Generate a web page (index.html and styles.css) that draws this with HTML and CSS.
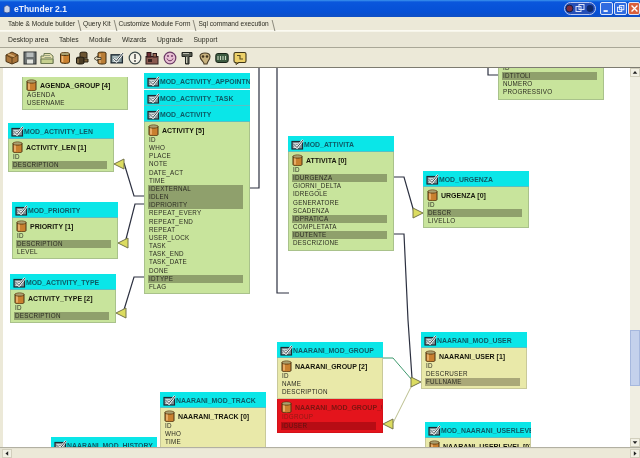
FILE: index.html
```html
<!DOCTYPE html>
<html lang="en">
<head>
<meta charset="utf-8">
<title>eThunder 2.1</title>
<link rel="stylesheet" href="styles.css">
</head>
<body>
<svg class="defs" width="0" height="0" aria-hidden="true">
  <symbol id="cyl" viewBox="0 0 11 13">
    <path d="M1 2.5C1 .6 10 .6 10 2.5V10.5C10 12.4 1 12.4 1 10.5Z" fill="#c9802f" stroke="#4a3312" stroke-width="1"/>
    <path d="M3 3.8V10.6" stroke="#efb877" stroke-width="1.6"/>
    <path d="M1 2.6C1 4.5 10 4.5 10 2.6" fill="none" stroke="#4a3312" stroke-width="1"/>
    <ellipse cx="5.5" cy="2.4" rx="4" ry="1.2" fill="#a8a070"/>
  </symbol>
  <symbol id="chk" viewBox="0 0 13 11">
    <rect x="1" y="2.5" width="10.5" height="7.5" fill="#7f9498" stroke="#1e2a32" stroke-width="1.2"/>
    <path d="M2.5 4.5H7M2.5 6.5H6M2.5 8.5H8" stroke="#dfe6e6" stroke-width=".8"/>
    <path d="M3.5 6L6 8.500L12 1" fill="none" stroke="#fff" stroke-width="2.200"/>
    <path d="M3.5 6L6 8.500L12 1" fill="none" stroke="#1c2a30" stroke-width=".9"/>
  </symbol>
</svg>
<div class="app">
  <header class="titlebar">
    <svg class="app-icon" viewBox="0 0 8 10"><path d="M4 1L7 3V8L4 9L1 8V3Z" fill="#c9d4ea" stroke="#31509a" stroke-width=".8"/></svg>
    <span class="app-name">eThunder 2.1</span>
    <div class="win-controls">
      <svg class="win-cluster" viewBox="0 0 32 13">
        <rect x=".5" y=".5" width="31" height="12" rx="6" fill="#254fb8" stroke="#b9c8ee"/>
        <circle cx="5.5" cy="6.5" r="3.4" fill="#7d2a3a" stroke="#10204a"/>
        <rect x="12" y="4.5" width="5" height="5" fill="none" stroke="#dbe4fa"/>
        <rect x="15" y="2.5" width="5" height="5" fill="none" stroke="#dbe4fa"/>
        <circle cx="26" cy="6.5" r="3.4" fill="#102a6b"/>
      </svg>
      <span class="win-btn"><svg viewBox="0 0 13 13"><rect x="3" y="8.5" width="5" height="2" fill="#fff"/></svg></span>
      <span class="win-btn"><svg viewBox="0 0 13 13"><rect x="3" y="5" width="5" height="5" fill="none" stroke="#fff"/><rect x="5.5" y="3" width="5" height="5" fill="none" stroke="#fff"/></svg></span>
      <span class="win-btn win-close"><svg viewBox="0 0 13 13"><path d="M3 3L10 10M10 3L3 10" stroke="#fff" stroke-width="1.6"/></svg></span>
    </div>
  </header>

  <nav class="tabs">
    <span class="tab">Table &amp; Module builder</span>
    <span class="tab">Query Kit</span>
    <span class="tab">Customize Module Form</span>
    <span class="tab">Sql command execution</span>
  </nav>

  <nav class="menu">
    <span>Desktop area</span><span>Tables</span><span>Module</span><span>Wizards</span><span>Upgrade</span><span>Support</span>
  </nav>

  <div class="toolbar">
    <svg viewBox="0 0 14 14"><path d="M7 1L13 4V10.5L7 13L1 10.5V4Z" fill="#a9743a" stroke="#4d3415"/><path d="M1 4L7 7L13 4M7 7V13" fill="none" stroke="#5d3f18"/><path d="M3 2.8L9.5 5.7" stroke="#d8ae72" stroke-width="1.3"/></svg>
    <svg viewBox="0 0 14 14"><rect x="1" y="1" width="12" height="12" fill="#6d7272" stroke="#2c3030"/><rect x="3.5" y="1.5" width="7" height="4.5" fill="#b7bcbc"/><rect x="4" y="8.5" width="6" height="4" fill="#e3e5e0"/></svg>
    <svg viewBox="0 0 14 14"><path d="M1 5H4V2.5H10L13 5V12.5H1Z" fill="#e5dfae" stroke="#6d7a52"/><path d="M4.5 4.5H10M4.5 6.5H11" stroke="#9aa582"/><path d="M1 8H13V12.5H1Z" fill="#c6d08f" stroke="#6d7a52"/></svg>
    <svg viewBox="0 0 14 14"><use href="#cyl" x="1.5" y="0" width="11" height="14"/></svg>
    <svg viewBox="0 0 14 14"><path d="M5 2C5 .8 12 .8 12 2V7H5Z" fill="#6c5532" stroke="#2a2213"/><path d="M1.5 7C1.5 5.8 9 5.8 9 7V12C9 13.4 1.5 13.4 1.5 12Z" fill="#4b3d25" stroke="#1e1a10"/><path d="M3 8V12" stroke="#a58a5c"/><path d="M9 8H13V11H9Z" fill="#7a6038" stroke="#2a2213"/></svg>
    <svg viewBox="0 0 14 14"><path d="M5 2C5 .8 13 .8 13 2V12C13 13.4 5 13.4 5 12Z" fill="#b97d35" stroke="#3f2c10"/><path d="M7 3V12" stroke="#e8bb80" stroke-width="1.2"/><path d="M1 7.5L4.5 5V6.5H8V8.5H4.5V10Z" fill="#d9d3b8" stroke="#3a3325" stroke-width=".8"/></svg>
    <svg viewBox="0 0 14 14"><use href="#chk" x="0" y="1" width="14" height="12"/></svg>
    <svg viewBox="0 0 14 14"><circle cx="7" cy="7" r="5.8" fill="#f4f2e8" stroke="#3d4a4a" stroke-width="1.2"/><path d="M7 3V8" stroke="#3d3d3d" stroke-width="1.4"/><circle cx="7" cy="10" r=".9" fill="#3d3d3d"/></svg>
    <svg viewBox="0 0 14 14"><rect x="1" y="5.5" width="12" height="7.5" fill="#8a5a50" stroke="#33201e"/><rect x="2" y="1.5" width="4" height="4.5" fill="#6f2e33" stroke="#2a1517"/><rect x="8" y="2.5" width="3.5" height="3.5" fill="#9c6b55" stroke="#2a1517"/><path d="M3 8H7V11H3Z" fill="#3a2422"/></svg>
    <svg viewBox="0 0 14 14"><circle cx="7" cy="7" r="5.8" fill="#e7bfd3" stroke="#6b3a66" stroke-width="1.2"/><path d="M4 7.5C5 10.5 9 10.5 10 7.5" fill="none" stroke="#6b2f5f"/><circle cx="5" cy="5" r=".9" fill="#6b2f5f"/><circle cx="9" cy="5" r=".9" fill="#6b2f5f"/></svg>
    <svg viewBox="0 0 14 14"><path d="M2 1.5H12V5.5H9V13H5.5V5.5H2Z" fill="#565a50" stroke="#20231e"/><path d="M3 2.5H9" stroke="#bcbcae"/><path d="M6.7 6V12" stroke="#e4e2d0"/></svg>
    <svg viewBox="0 0 14 14"><path d="M2 5C2 1 12 1 12 5.5C12 9 9.5 10 9 13H6C6 10.500 2 9.500 2 5Z" fill="#c8b27e" stroke="#4a3d25" stroke-width="1.1"/><circle cx="5" cy="5.500" r="1.300" fill="#43351e"/><circle cx="9" cy="5.500" r="1.300" fill="#43351e"/></svg>
    <svg viewBox="0 0 14 14"><rect x=".8" y="2.500" width="12.400" height="9" rx="2" fill="#3c5a40" stroke="#182418"/><path d="M3 5V9M5.500 5V9M8 5V9M10.500 5V9" stroke="#c7d5bd" stroke-width="1.100"/></svg>
    <svg viewBox="0 0 14 14"><rect x="1" y="1.500" width="12" height="10" rx="1.500" fill="#edd16a" stroke="#3e3518" stroke-width="1.100"/><path d="M3 11.500V13.500L6 11.500" fill="#edd16a" stroke="#3e3518"/><path d="M4 4.500H7V8H10" fill="none" stroke="#5c4d1d" stroke-width="1.100"/></svg>
  </div>

  <div class="workspace">
    <main class="canvas">
      <svg class="links" width="627" height="379" viewBox="3 68 627 379">
        <g class="link">
          <path d="M249 188H259V68"/>
          <path d="M277 68V293H289"/>
          <path d="M488 68V75H498"/>
          <path d="M124 163L134 196H144"/>
          <path d="M125 243L135 204H144"/>
          <path d="M123 313L134 277H144"/>
          <path d="M394 177H404L414 212"/>
          <path d="M394 234H404L408 320L412 378"/>
        </g>
        <path class="link-teal" d="M382 358H393L412 380"/>
        <path class="link-thin" d="M393 423L412 385"/>
        <g class="arrow">
          <path d="M114 164L124 159V169Z"/>
          <path d="M118 243L128 238V248Z"/>
          <path d="M116 313L126 308V318Z"/>
          <path d="M423 213L413 208V218Z"/>
          <path d="M421 382L411 377V387Z"/>
          <path d="M383 424L393 419V429Z"/>
        </g>
      </svg>

      <section class="node n-agenda">
        <div class="body">
          <div class="title"><svg><use href="#cyl"/></svg>AGENDA_GROUP [4]</div>
          <div class="row">AGENDA</div>
          <div class="row">USERNAME</div>
        </div>
      </section>

      <section class="node n-appoint">
        <div class="head"><svg><use href="#chk"/></svg>MOD_ACTIVITY_APPOINTN</div>
      </section>
      <section class="node n-task">
        <div class="head"><svg><use href="#chk"/></svg>MOD_ACTIVITY_TASK</div>
      </section>
      <section class="node n-activity">
        <div class="head"><svg><use href="#chk"/></svg>MOD_ACTIVITY</div>
        <div class="body">
          <div class="title"><svg><use href="#cyl"/></svg>ACTIVITY [5]</div>
          <div class="row">ID</div>
          <div class="row">WHO</div>
          <div class="row">PLACE</div>
          <div class="row">NOTE</div>
          <div class="row">DATE_ACT</div>
          <div class="row">TIME</div>
          <div class="row key">IDEXTERNAL</div>
          <div class="row key">IDLEN</div>
          <div class="row key">IDPRIORITY</div>
          <div class="row">REPEAT_EVERY</div>
          <div class="row">REPEAT_END</div>
          <div class="row">REPEAT</div>
          <div class="row">USER_LOCK</div>
          <div class="row">TASK</div>
          <div class="row">TASK_END</div>
          <div class="row">TASK_DATE</div>
          <div class="row">DONE</div>
          <div class="row key">IDTYPE</div>
          <div class="row">FLAG</div>
        </div>
      </section>

      <section class="node n-len">
        <div class="head"><svg><use href="#chk"/></svg>MOD_ACTIVITY_LEN</div>
        <div class="body">
          <div class="title"><svg><use href="#cyl"/></svg>ACTIVITY_LEN [1]</div>
          <div class="row">ID</div>
          <div class="row key">DESCRIPTION</div>
        </div>
      </section>

      <section class="node n-priority">
        <div class="head"><svg><use href="#chk"/></svg>MOD_PRIORITY</div>
        <div class="body">
          <div class="title"><svg><use href="#cyl"/></svg>PRIORITY [1]</div>
          <div class="row">ID</div>
          <div class="row key">DESCRIPTION</div>
          <div class="row">LEVEL</div>
        </div>
      </section>

      <section class="node n-type">
        <div class="head"><svg><use href="#chk"/></svg>MOD_ACTIVITY_TYPE</div>
        <div class="body">
          <div class="title"><svg><use href="#cyl"/></svg>ACTIVITY_TYPE [2]</div>
          <div class="row">ID</div>
          <div class="row key">DESCRIPTION</div>
        </div>
      </section>

      <section class="node n-attivita">
        <div class="head"><svg><use href="#chk"/></svg>MOD_ATTIVITA</div>
        <div class="body">
          <div class="title"><svg><use href="#cyl"/></svg>ATTIVITA [0]</div>
          <div class="row">ID</div>
          <div class="row key">IDURGENZA</div>
          <div class="row">GIORNI_DELTA</div>
          <div class="row">IDREGOLE</div>
          <div class="row">GENERATORE</div>
          <div class="row">SCADENZA</div>
          <div class="row key">IDPRATICA</div>
          <div class="row">COMPLETATA</div>
          <div class="row key">IDUTENTE</div>
          <div class="row">DESCRIZIONE</div>
        </div>
      </section>

      <section class="node n-urgenza">
        <div class="head"><svg><use href="#chk"/></svg>MOD_URGENZA</div>
        <div class="body">
          <div class="title"><svg><use href="#cyl"/></svg>URGENZA [0]</div>
          <div class="row">ID</div>
          <div class="row key">DESCR</div>
          <div class="row">LIVELLO</div>
        </div>
      </section>

      <section class="node n-titoli">
        <div class="body">
          <div class="row">ID</div>
          <div class="row key">IDTITOLI</div>
          <div class="row">NUMERO</div>
          <div class="row">PROGRESSIVO</div>
        </div>
      </section>

      <section class="node n-user">
        <div class="head"><svg><use href="#chk"/></svg>NAARANI_MOD_USER</div>
        <div class="body yellow">
          <div class="title"><svg><use href="#cyl"/></svg>NAARANI_USER [1]</div>
          <div class="row">ID</div>
          <div class="row">DESCRUSER</div>
          <div class="row key">FULLNAME</div>
        </div>
      </section>

      <section class="node n-group">
        <div class="head"><svg><use href="#chk"/></svg>NAARANI_MOD_GROUP</div>
        <div class="body yellow">
          <div class="title"><svg><use href="#cyl"/></svg>NAARANI_GROUP [2]</div>
          <div class="row">ID</div>
          <div class="row">NAME</div>
          <div class="row">DESCRIPTION</div>
        </div>
        <div class="body red">
          <div class="title"><svg><use href="#cyl"/></svg>NAARANI_MOD_GROUP_USE</div>
          <div class="row">IDGROUP</div>
          <div class="row key">IDUSER</div>
        </div>
      </section>

      <section class="node n-track">
        <div class="head"><svg><use href="#chk"/></svg>NAARANI_MOD_TRACK</div>
        <div class="body yellow">
          <div class="title"><svg><use href="#cyl"/></svg>NAARANI_TRACK [0]</div>
          <div class="row">ID</div>
          <div class="row">WHO</div>
          <div class="row">TIME</div>
        </div>
      </section>

      <section class="node n-history">
        <div class="head"><svg><use href="#chk"/></svg>NAARANI_MOD_HISTORY</div>
      </section>

      <section class="node n-level">
        <div class="head"><svg><use href="#chk"/></svg>MOD_NAARANI_USERLEVEL</div>
        <div class="body yellow">
          <div class="title"><svg><use href="#cyl"/></svg>NAARANI_USERLEVEL [0]</div>
        </div>
      </section>
    </main>

    <aside class="vscroll">
      <span class="sbtn"><svg viewBox="0 0 9 9"><path d="M1.500 6L4.500 2.500L7.500 6Z" fill="#222"/></svg></span>
      <div class="vtrack"><span class="vthumb"></span></div>
      <span class="sbtn"><svg viewBox="0 0 9 9"><path d="M1.500 3L4.500 6.500L7.500 3Z" fill="#222"/></svg></span>
    </aside>
  </div>

  <footer class="hscroll">
    <span class="sbtn"><svg viewBox="0 0 9 9"><path d="M6 1.500L2.500 4.500L6 7.500Z" fill="#222"/></svg></span>
    <div class="htrack"></div>
    <span class="sbtn"><svg viewBox="0 0 9 9"><path d="M3 1.500L6.500 4.500L3 7.500Z" fill="#222"/></svg></span>
  </footer>
</div>
</body>
</html>
```

FILE: styles.css
```css
* { box-sizing: border-box; }
html, body { margin: 0; height: 100%; overflow: hidden; background: #ece9d8; }
.defs { position: absolute; }
.app {
  width: 640px; height: 458px; display: flex; flex-direction: column;
  font-family: "Liberation Sans", Arial, sans-serif; color: #2c2c22;
  filter: blur(0.35px);
}

.titlebar {
  height: 17px; flex: none; display: flex; align-items: center; padding-left: 3px;
  background: linear-gradient(#3d95ee 0, #0a56dc 2px, #0650d6 12px, #0f4fc4 17px);
}
.app-icon { width: 8px; height: 10px; margin-right: 3px; }
.app-name { color: #e8eefc; font-size: 8.500px; font-weight: bold; letter-spacing: 0; }
.win-controls { margin-left: auto; display: flex; align-items: center; gap: 1px; }
.win-cluster { width: 32px; height: 13px; margin-right: 3px; }
.win-btn {
  width: 13px; height: 13px; border: 1px solid #dce6fa; border-radius: 2px;
  background: #2f6be0; display: block;
}
.win-btn svg { display: block; width: 11px; height: 11px; }
.win-close { background: #d9603c; width: 12px; }

.tabs {
  height: 14px; flex: none; display: flex; padding-left: 4px; align-items: center;
  font-size: 6.600px; background: #ece9d8; border-bottom: 1px solid #fbfaf2;
}
.tab { position: relative; padding: 0 4px; white-space: nowrap; }
.tab::after {
  content: ""; position: absolute; right: -1px; top: 0; width: 1px; height: 11px;
  background: #8c8a7c; transform: skewX(14deg);
}

.menu {
  height: 17px; flex: none; display: flex; align-items: center; gap: 10.500px; padding-left: 8px;
  font-size: 6.800px; background: #e9e6d6; border-top: 1px solid #f6f5ea; border-bottom: 1px solid #a9a797;
}

.toolbar {
  height: 20px; flex: none; display: flex; align-items: center; gap: 3.500px; padding-left: 5px;
  background: #ece9d8; border-bottom: 1px solid #7d7b70;
}
.toolbar svg { width: 14px; height: 14px; flex: none; }

.workspace { flex: 1; min-height: 0; display: flex; }
.canvas {
  flex: 1; position: relative; overflow: hidden; background: #fff;
  margin-left: 3px; border-left: 0;
}
.links { position: absolute; left: 0; top: 0; }
.link path { fill: none; stroke: #2c3040; stroke-width: 1.200; }
.link-teal { fill: none; stroke: #3f9a6e; stroke-width: 1; }
.link-thin { fill: none; stroke: #a8ad70; stroke-width: .8; }
.arrow path { fill: #dcdc60; stroke: #74744a; stroke-width: 1; }

.node { position: absolute; width: 106px; font-size: 6.300px; letter-spacing: .25px; }
.head {
  height: 16px; display: flex; align-items: center; white-space: nowrap; overflow: hidden;
  background: #0ae6e8; color: #0d5a66; font-weight: bold; font-size: 6.900px; letter-spacing: 0;
  padding-left: 3px; box-shadow: inset 0 -1px 0 #58c0c4;
}
.head svg { width: 13px; height: 11px; flex: none; }
.body { background: #c8e49c; border: 1px solid #a9c28b; border-top: 0; padding: 2px 0 2px 3px; }
.body.yellow { background: #e9e9a9; border-color: #c9c99a; }
.body.red { background: #e4141c; border-color: #d41018; color: #8f1a14; padding-top: 2px; }
.title {
  height: 12px; display: flex; align-items: center; white-space: nowrap; overflow: hidden;
  font-weight: bold; font-size: 7px; letter-spacing: 0; color: #17170c;
}
.title svg { width: 11px; height: 13px; margin-right: 3px; flex: none; }
.row { height: 8.170px; line-height: 8.170px; padding-left: 1px; margin-right: 6px; white-space: nowrap; }
.key { background: #8fa06c; }
.yellow .key { background: #aaa878; }
.red .key { background: #b70c14; color: #5e1210; }
.red .title { color: #7d1410; }

.n-agenda   { left: 19px;  top: 9px; }
.n-appoint  { left: 141px; top: 5px; }
.n-task     { left: 141px; top: 22px; }
.n-activity { left: 141px; top: 38px; }
.n-len      { left: 5px;   top: 55px; }
.n-priority { left: 9px;   top: 134px; }
.n-type     { left: 7px;   top: 206px; }
.n-attivita { left: 285px; top: 68px; }
.n-urgenza  { left: 420px; top: 103px; }
.n-titoli   { left: 495px; top: -6px; }
.n-user     { left: 418px; top: 264px; }
.n-group    { left: 274px; top: 274px; }
.n-track    { left: 157px; top: 324px; }
.n-history  { left: 48px;  top: 369px; }
.n-level    { left: 422px; top: 354px; }

.vscroll { width: 10px; flex: none; display: flex; flex-direction: column; background: #ece9d8; }
.sbtn {
  width: 10px; height: 9px; flex: none; display: block; background: #f2f0e4;
  border: 1px solid #d2cfbd;
}
.sbtn svg { display: block; width: 8px; height: 7px; }
.vtrack { flex: 1; background: #f0eee2; display: flex; flex-direction: column; justify-content: flex-end; padding-bottom: 52px; }
.vthumb { height: 56px; background: #c4d1ec; border: 1px solid #a6b8de; display: block; }

.hscroll {
  height: 11px; flex: none; display: flex; padding: 1px 0 0 2px;
  background: #e5e2d2; border-top: 1px solid #b2b0a2;
}
.htrack { flex: 1; background: #ece9d8; }
```
